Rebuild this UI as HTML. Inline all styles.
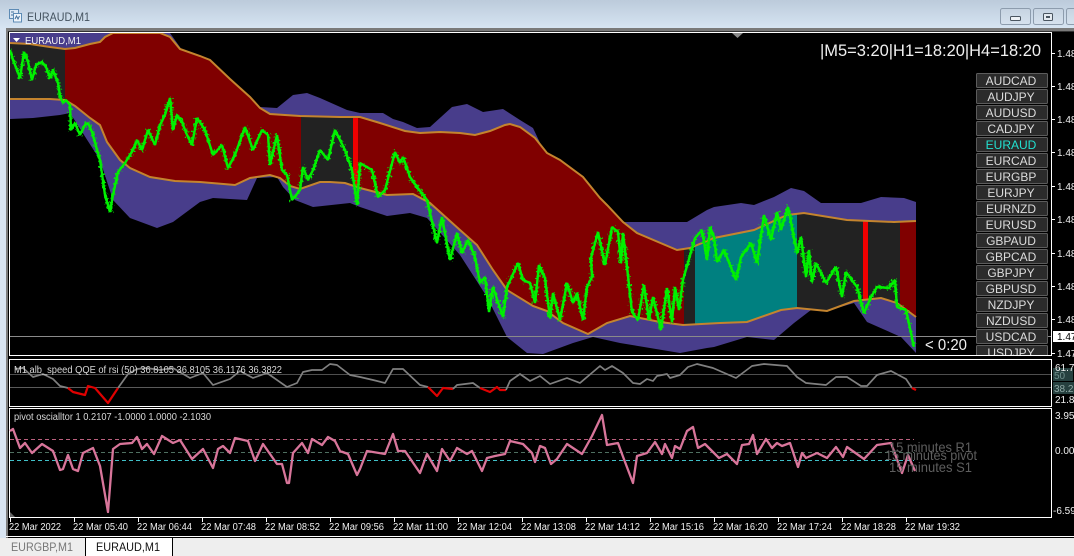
<!DOCTYPE html>
<html><head><meta charset="utf-8"><title>EURAUD,M1</title>
<style>
html,body{margin:0;padding:0;background:#000;width:1074px;height:556px;overflow:hidden}
svg{display:block}
text{font-family:"Liberation Sans",sans-serif}
.ax{font-size:10px;fill:#f0f0f0}
.bt{font-size:12px;fill:#dcdcdc;text-anchor:middle}
</style></head><body>
<svg width="1074" height="556" viewBox="0 0 1074 556" xmlns="http://www.w3.org/2000/svg">
<defs>
<linearGradient id="tb" x1="0" y1="0" x2="0" y2="1"><stop offset="0" stop-color="#bccbdb"/><stop offset="1" stop-color="#d6e4f2"/></linearGradient>
<linearGradient id="wb" x1="0" y1="0" x2="0" y2="1"><stop offset="0" stop-color="#c6d3e1"/><stop offset="1" stop-color="#d6e2ee"/></linearGradient>
<clipPath id="main"><rect x="10" y="33" width="1041" height="322"/></clipPath>
<clipPath id="band"><polygon points="10,43 30,44 50,47 65,49 75,48 90,44 100,42 105,37 113,33 160,33 170,37 180,49 200,56 210,60 230,79 250,97 260,108 270,114 300,116 340,117 360,117 380,123 405,131 420,133 440,132 460,133 475,135 490,131 505,125 510,124 520,127 535,138 547,153 560,160 583,177 600,198 607,205 623,222 637,233 677,250 690,248 714,238 754,230 787,215 804,213 847,220 894,222 916,221 916,317 897,303 881,298 854,301 827,311 797,308 781,310 747,322 720,323 683,325 660,322 630,316 607,323 588,334 563,323 547,311 533,306 507,290 493,270 477,245 460,230 430,203 413,194 387,195 360,188 345,183 330,182 320,182 300,189 290,186 280,178 270,175 250,178 235,185 200,182 175,181 150,177 130,168 120,160 107,142 100,125 90,118 75,106 65,100 50,99 30,99 10,99"/></clipPath>
<filter id="jit" filterUnits="userSpaceOnUse" x="0" y="30" width="1000" height="330">
<feTurbulence type="fractalNoise" baseFrequency="0.45" numOctaves="2" seed="7" result="n"/>
<feDisplacementMap in="SourceGraphic" in2="n" scale="9" xChannelSelector="R" yChannelSelector="G"/>
</filter>
<polyline id="gr" fill="none" stroke="#00f000" stroke-linejoin="bevel" points="10,50 13,60 17,70 20,78 22,65 24,52 28,62 32,80 36,65 42,62 46,67 50,78 53,70 58,83 60,96 63,103 66,100 70,105 71,130 75,123 80,135 85,125 88,123 92,132 100,160 105,195 110,212 113,195 118,172 125,163 133,150 137,140 142,150 148,130 155,145 160,125 165,115 170,98 173,130 177,115 182,122 187,135 192,145 197,118 205,130 213,155 222,145 228,168 235,155 245,127 253,150 262,130 268,135 270,165 277,135 282,170 287,175 292,200 300,190 303,167 308,180 313,170 320,150 328,160 335,130 345,150 352,170 357,205 360,163 372,170 378,197 385,190 395,152 400,163 403,157 410,177 417,187 427,200 437,243 442,217 450,260 457,233 462,253 468,240 475,257 480,283 485,277 489,312 493,287 503,317 507,287 518,263 523,280 530,283 535,303 539,265 545,278 550,318 553,293 560,320 567,283 573,303 577,293 583,320 587,287 592,277 591,258 598,232 605,265 612,227 618,232 621,263 623,233 627,267 632,312 638,320 644,285 649,320 653,297 661,330 667,288 672,322 675,287 679,310 683,280 695,238 702,230 707,260 710,227 714,237 717,262 724,250 736,280 741,257 751,243 757,263 764,215 771,240 777,212 781,230 788,207 797,253 801,237 806,277 809,250 812,282 816,263 826,283 836,267 842,297 846,272 857,287 864,313 871,297 877,287 889,288 895,280 897,307 906,310 914,347"/>
</defs>

<!-- window chrome -->
<rect width="1074" height="28" fill="url(#tb)"/>
<rect y="28" width="1074" height="3" fill="#7a7a7a"/>
<rect y="31" width="1074" height="1" fill="#333"/>
<rect y="28" width="6" height="510" fill="#d9e5f2"/>
<rect x="6" y="28" width="2" height="510" fill="#7d7d7d"/>

<g fill="none" stroke="#5d8bb5" stroke-width="1">
<rect x="9.500" y="9.500" width="9" height="9" fill="#dce8f4"/>
<rect x="13.500" y="13.500" width="8" height="8.500" fill="#eef4fa"/>
<path d="M15 19l1.500-3 1.500 3 1.500-3" stroke="#44709a"/>
<path d="M11 12h3M11 15h2" stroke="#44709a"/>
</g>
<text x="27" y="21" font-size="12" fill="#44525f" textLength="63" lengthAdjust="spacingAndGlyphs">EURAUD,M1</text>

<g stroke="#8d9cad" fill="url(#wb)">
<rect x="1000.500" y="8.500" width="30" height="16" rx="2"/>
<rect x="1033.500" y="8.500" width="30" height="16" rx="2"/>
<rect x="1066.500" y="8.500" width="30" height="16" rx="2"/>
</g>
<rect x="1010.500" y="16.500" width="10" height="4" rx="1" fill="#eef2f6" stroke="#4a5560"/>
<rect x="1043.500" y="13.500" width="9" height="7" rx="1" fill="#e4eaf0" stroke="#4a5560"/>
<rect x="1046" y="16" width="4" height="2" fill="#4a5560"/>

<!-- chart background -->
<rect x="8" y="32" width="1066" height="505" fill="#000"/>

<!-- main chart -->
<g clip-path="url(#main)">
<polygon fill="#483d8b" points="10,33 170,33 182,50 200,56 210,60 230,79 247,97 260,107 277,108 293,95 307,93 320,98 347,110 360,113 383,113 393,119 403,122 417,128 430,127 452,107 467,104 483,112 503,109 520,120 533,128 542,147 547,153 560,160 583,177 600,198 607,205 623,222 687,222 707,210 714,207 741,203 754,205 774,197 791,188 804,191 821,203 861,203 881,197 904,198 916,202 916,353 901,337 867,322 854,303 827,311 811,310 794,323 774,340 747,337 714,347 707,348 680,353 620,343 593,337 573,343 543,354 527,353 507,337 487,297 460,255 427,218 410,213 387,216 360,207 350,203 313,207 295,200 283,187 277,177 257,178 247,200 213,198 200,202 173,222 157,228 130,218 113,200 100,160 70,113 60,115 33,118 10,119"/>
<g clip-path="url(#band)">
<rect x="10" y="33" width="55" height="120" fill="#222"/>
<rect x="65" y="33" width="236" height="200" fill="#800000"/>
<rect x="301" y="33" width="52" height="200" fill="#222"/>
<rect x="353" y="33" width="5" height="200" fill="#f00000"/>
<rect x="358" y="33" width="326" height="320" fill="#800000"/>
<rect x="684" y="200" width="11" height="140" fill="#222"/>
<rect x="695" y="200" width="102" height="140" fill="#008080"/>
<rect x="797" y="200" width="66" height="140" fill="#222"/>
<rect x="863" y="200" width="5" height="140" fill="#f00000"/>
<rect x="868" y="200" width="32" height="140" fill="#222"/>
<rect x="900" y="200" width="16" height="140" fill="#800000"/>
</g>
<polyline fill="none" stroke="#c4842e" stroke-width="2" points="10,43 30,44 50,47 65,49 75,48 90,44 100,42 105,37 113,33 160,33 170,37 180,49 200,56 210,60 230,79 250,97 260,108 270,114 300,116 340,117 360,117 380,123 405,131 420,133 440,132 460,133 475,135 490,131 505,125 510,124 520,127 535,138 547,153 560,160 583,177 600,198 607,205 623,222 637,233 677,250 690,248 714,238 754,230 787,215 804,213 847,220 894,222 916,221"/>
<polyline fill="none" stroke="#c4842e" stroke-width="2" points="10,99 30,99 50,99 65,100 75,106 90,118 100,125 107,142 120,160 130,168 150,177 175,181 200,182 235,185 250,178 270,175 280,178 290,186 300,189 320,182 330,182 345,183 360,188 387,195 413,194 430,203 460,230 477,245 493,270 507,290 533,306 547,311 563,323 588,334 607,323 630,316 660,322 683,325 720,323 747,322 781,310 797,308 827,311 854,301 881,298 897,303 916,317"/>
<line x1="10" y1="336.500" x2="1051" y2="336.500" stroke="#8a8a8a"/>
<use href="#gr" filter="url(#jit)" stroke-width="2"/>
<use href="#gr" stroke-width="2.400"/>
</g>
<polygon points="732,33 743,33 737.500,38" fill="#8a8a8a"/>
<polygon points="13,38 20,38 16.500,42" fill="#fff"/>
<text x="25" y="44" font-size="10" fill="#f4f4f4" textLength="56" lengthAdjust="spacingAndGlyphs">EURAUD,M1</text>
<text x="820" y="56" font-size="17" fill="#f0f0f0" textLength="221" lengthAdjust="spacingAndGlyphs">|M5=3:20|H1=18:20|H4=18:20</text>
<text x="925" y="350" font-size="15.500" fill="#f0f0f0" textLength="42" lengthAdjust="spacingAndGlyphs">&lt; 0:20</text>

<!-- symbol buttons -->
<g clip-path="url(#main)">
<g fill="#2b2b2b" stroke="#5c5c5c">
<rect x="976.500" y="73.500" width="71" height="14" rx="1"/><rect x="976.500" y="89.500" width="71" height="14" rx="1"/><rect x="976.500" y="105.500" width="71" height="14" rx="1"/><rect x="976.500" y="121.500" width="71" height="14" rx="1"/><rect x="976.500" y="137.500" width="71" height="14" rx="1"/><rect x="976.500" y="153.500" width="71" height="14" rx="1"/><rect x="976.500" y="169.500" width="71" height="14" rx="1"/><rect x="976.500" y="185.500" width="71" height="14" rx="1"/><rect x="976.500" y="201.500" width="71" height="14" rx="1"/><rect x="976.500" y="217.500" width="71" height="14" rx="1"/><rect x="976.500" y="233.500" width="71" height="14" rx="1"/><rect x="976.500" y="249.500" width="71" height="14" rx="1"/><rect x="976.500" y="265.500" width="71" height="14" rx="1"/><rect x="976.500" y="281.500" width="71" height="14" rx="1"/><rect x="976.500" y="297.500" width="71" height="14" rx="1"/><rect x="976.500" y="313.500" width="71" height="14" rx="1"/><rect x="976.500" y="329.500" width="71" height="14" rx="1"/><rect x="976.500" y="345.500" width="71" height="14" rx="1"/>
</g>
<text class="bt" x="1011" y="85">AUDCAD</text><text class="bt" x="1011" y="101">AUDJPY</text><text class="bt" x="1011" y="117">AUDUSD</text><text class="bt" x="1011" y="133">CADJPY</text><text class="bt" x="1011" y="149" style="fill:#22e0d0">EURAUD</text><text class="bt" x="1011" y="165">EURCAD</text><text class="bt" x="1011" y="181">EURGBP</text><text class="bt" x="1011" y="197">EURJPY</text><text class="bt" x="1011" y="213">EURNZD</text><text class="bt" x="1011" y="229">EURUSD</text><text class="bt" x="1011" y="245">GBPAUD</text><text class="bt" x="1011" y="261">GBPCAD</text><text class="bt" x="1011" y="277">GBPJPY</text><text class="bt" x="1011" y="293">GBPUSD</text><text class="bt" x="1011" y="309">NZDJPY</text><text class="bt" x="1011" y="325">NZDUSD</text><text class="bt" x="1011" y="341">USDCAD</text><text class="bt" x="1011" y="357">USDJPY</text>
</g>

<!-- frames -->
<g fill="none" stroke="#fff">
<rect x="9.500" y="32.500" width="1042" height="323"/>
<rect x="9.500" y="359.500" width="1042" height="47"/>
<rect x="9.500" y="408.500" width="1042" height="109"/>
</g>
<line x1="0" y1="536.500" x2="1074" y2="536.500" stroke="#fff"/>
<rect x="0" y="536" width="6" height="1" fill="#d9e5f2"/>

<!-- right axis main -->
<g stroke="#fff"><path d="M1052 53.500h3M1052 86.500h3M1052 119.500h3M1052 152.500h3M1052 186.500h3M1052 219.500h3M1052 253.500h3M1052 286.500h3M1052 319.500h3M1052 353.500h3"/></g>
<g><text class="ax" x="1057" y="57">1.486</text><text class="ax" x="1057" y="90">1.486</text><text class="ax" x="1057" y="123">1.485</text><text class="ax" x="1057" y="156">1.485</text><text class="ax" x="1057" y="190">1.484</text><text class="ax" x="1057" y="223">1.484</text><text class="ax" x="1057" y="257">1.483</text><text class="ax" x="1057" y="290">1.483</text><text class="ax" x="1057" y="323">1.482</text><text class="ax" x="1057" y="357">1.479</text></g>
<rect x="1053" y="331" width="21" height="11" fill="#fff"/>
<text x="1057" y="340" font-size="10" fill="#000">1.479</text>

<!-- QQE -->
<line x1="10" y1="374.500" x2="1051" y2="374.500" stroke="#4e4e4e"/>
<line x1="10" y1="387.500" x2="1051" y2="387.500" stroke="#5a5a5a"/>
<g fill="none" stroke-linejoin="round">
<polyline stroke="#808080" stroke-width="1.700" points="15,369 23,368 33,377 43,374 53,379 60,386 68,388"/>
<polyline stroke="#e00000" stroke-width="2.200" points="68,388 73,392 85,395 88,386 95,388 108,403 118,388"/>
<polyline stroke="#808080" stroke-width="1.700" points="118,388 128,374 137,369 147,368 160,370 173,368 190,378 203,373 213,385 230,379 240,371 253,378 267,373 287,387 297,383 303,372 312,370 322,370 330,364 337,365 350,375 360,377 373,380 385,383 393,369 403,369 420,385 428,387"/>
<polyline stroke="#e00000" stroke-width="2.200" points="428,387 437,396 443,388 453,389"/>
<polyline stroke="#808080" stroke-width="1.700" points="453,389 457,385 473,383 480,388"/>
<polyline stroke="#e00000" stroke-width="2.200" points="480,388 490,392 497,387 500,390 506,390"/>
<polyline stroke="#808080" stroke-width="1.700" points="506,390 510,381 520,374 530,381 540,376 550,384 567,378 580,383 600,366 605,370 612,366 623,373 633,383 640,384 647,379 653,381 657,376 667,374 670,378 680,375 688,367 697,364 713,368 736,378 752,366 764,364 787,366 797,377 806,383 826,385 836,377 847,377 861,386 867,386 877,375 891,371 906,379 912,388"/>
<polyline stroke="#e00000" stroke-width="2.200" points="912,388 916,390"/>
</g>
<text x="14" y="373" font-size="10" fill="#d8d8d8" textLength="268" lengthAdjust="spacingAndGlyphs">M1 alb_speed QQE of rsi (50) 36.8105 36.8105 36.1176 36.3822</text>
<rect x="1053" y="368" width="20" height="13" fill="#26403f"/>
<rect x="1053" y="382" width="21" height="12" fill="#26403f"/>
<text x="1054" y="379" font-size="10" fill="#6f8f8c">50</text>
<text x="1054" y="392" font-size="10" fill="#8fa8a5">38.2</text>
<text class="ax" x="1055" y="371">61.7</text>
<text class="ax" x="1055" y="403">21.8</text>

<!-- pivot -->
<line x1="10" y1="439.500" x2="914" y2="439.500" stroke="#db7093" stroke-dasharray="4 3" opacity=".85"/>
<line x1="10" y1="452.500" x2="914" y2="452.500" stroke="#4f6f60" stroke-dasharray="4 3"/>
<line x1="10" y1="460.500" x2="914" y2="460.500" stroke="#40c0c8" stroke-dasharray="4 3"/>
<polyline fill="none" stroke="#d8759a" stroke-width="2.300" stroke-linejoin="round" points="10,431 13,429 20,448 25,443 32,453 42,444 53,451 60,470 63,469 68,455 73,469 78,471 83,453 93,448 100,466 108,512 113,449 120,444 132,443 137,437 142,449 147,444 154,454 162,436 173,443 180,440 192,459 203,449 213,468 218,449 223,446 230,453 235,438 248,441 255,461 263,444 277,464 282,464 287,483 289,483 293,453 302,443 308,453 312,439 322,445 328,437 335,441 340,451 348,454 357,475 360,469 367,451 385,454 393,434 398,451 405,451 420,473 427,454 437,471 442,449 450,461 457,448 467,454 472,451 482,471 487,458 495,456 505,454 510,441 523,444 532,453 535,462 540,446 545,448 551,464 557,459 567,444 582,454 592,436 602,415 607,445 618,443 622,454 633,483 637,456 647,453 655,442 662,454 665,444 672,458 675,446 680,449 687,431 693,427 698,448 705,444 714,453 719,458 727,454 737,464 742,445 749,444 753,435 757,454 766,439 772,448 777,443 782,446 790,443 798,467 802,453 806,458 817,453 827,458 836,447 843,457 847,447 864,459 877,445 891,443 902,473 908,455 915,471"/>
<text x="14" y="420" font-size="10" fill="#d8d8d8" textLength="197" lengthAdjust="spacingAndGlyphs">pivot oscialltor 1 0.2107 -1.0000 1.0000 -2.1030</text>
<g font-size="14" fill="#5e5e5e">
<text x="889" y="452" textLength="83" lengthAdjust="spacingAndGlyphs">15 minutes R1</text>
<text x="885" y="460" textLength="92" lengthAdjust="spacingAndGlyphs">15 minutes pivot</text>
<text x="889" y="472" textLength="83" lengthAdjust="spacingAndGlyphs">15 minutes S1</text>
</g>
<text class="ax" x="1055" y="419">3.95</text>
<text class="ax" x="1055" y="454">0.00</text>
<text class="ax" x="1053" y="514">-6.59</text>
<polygon points="10,512 15,517 10,517" fill="#666"/>

<!-- time axis -->
<path stroke="#fff" d="M10.500 518v4M74.500 518v4M138.500 518v4M202.500 518v4M266.500 518v4M330.500 518v4M394.500 518v4M458.500 518v4M522.500 518v4M586.500 518v4M650.500 518v4M714.500 518v4M778.500 518v4M842.500 518v4M906.500 518v4"/>
<g>
<text class="ax" x="9" y="530" textLength="52" lengthAdjust="spacingAndGlyphs">22 Mar 2022</text><text class="ax" x="73" y="530" textLength="55" lengthAdjust="spacingAndGlyphs">22 Mar 05:40</text><text class="ax" x="137" y="530" textLength="55" lengthAdjust="spacingAndGlyphs">22 Mar 06:44</text><text class="ax" x="201" y="530" textLength="55" lengthAdjust="spacingAndGlyphs">22 Mar 07:48</text><text class="ax" x="265" y="530" textLength="55" lengthAdjust="spacingAndGlyphs">22 Mar 08:52</text><text class="ax" x="329" y="530" textLength="55" lengthAdjust="spacingAndGlyphs">22 Mar 09:56</text><text class="ax" x="393" y="530" textLength="55" lengthAdjust="spacingAndGlyphs">22 Mar 11:00</text><text class="ax" x="457" y="530" textLength="55" lengthAdjust="spacingAndGlyphs">22 Mar 12:04</text><text class="ax" x="521" y="530" textLength="55" lengthAdjust="spacingAndGlyphs">22 Mar 13:08</text><text class="ax" x="585" y="530" textLength="55" lengthAdjust="spacingAndGlyphs">22 Mar 14:12</text><text class="ax" x="649" y="530" textLength="55" lengthAdjust="spacingAndGlyphs">22 Mar 15:16</text><text class="ax" x="713" y="530" textLength="55" lengthAdjust="spacingAndGlyphs">22 Mar 16:20</text><text class="ax" x="777" y="530" textLength="55" lengthAdjust="spacingAndGlyphs">22 Mar 17:24</text><text class="ax" x="841" y="530" textLength="55" lengthAdjust="spacingAndGlyphs">22 Mar 18:28</text><text class="ax" x="905" y="530" textLength="55" lengthAdjust="spacingAndGlyphs">22 Mar 19:32</text>
</g>

<!-- tabs -->
<rect x="0" y="538" width="1074" height="18" fill="#eeeeee"/>
<rect x="85.500" y="537.500" width="87" height="20" fill="#fff" stroke="#000"/>
<text x="11" y="551" font-size="12" fill="#777" textLength="62" lengthAdjust="spacingAndGlyphs">EURGBP,M1</text>
<text x="96" y="551" font-size="12" fill="#111" textLength="64" lengthAdjust="spacingAndGlyphs">EURAUD,M1</text>
</svg>
</body></html>
